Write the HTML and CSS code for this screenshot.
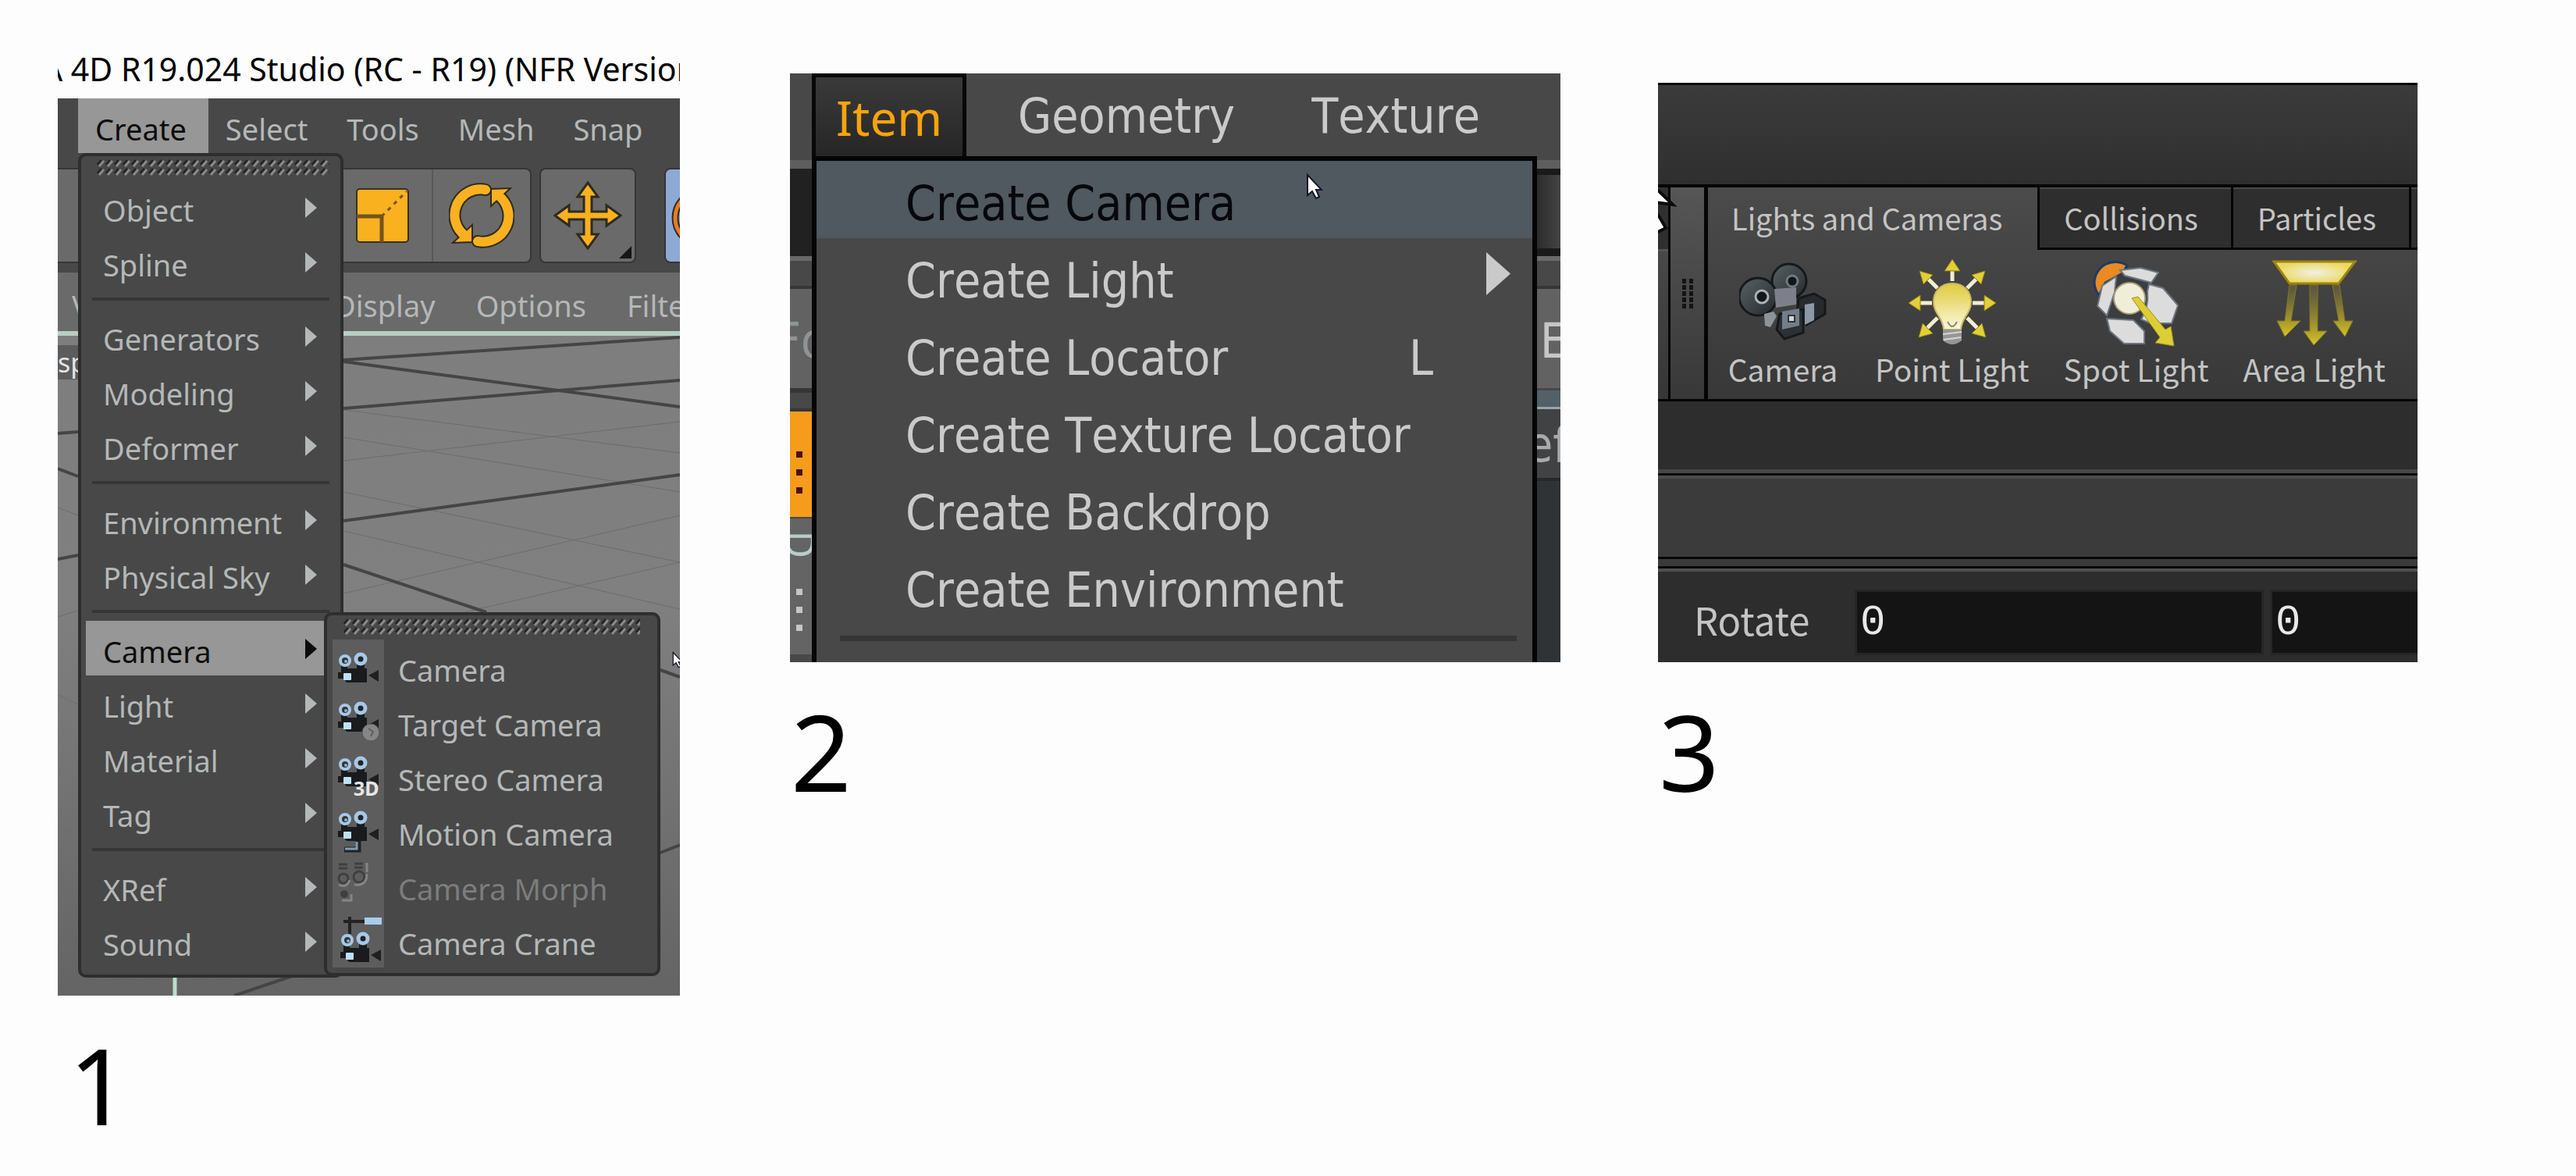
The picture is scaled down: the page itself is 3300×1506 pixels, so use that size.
FILE: index.html
```html
<!DOCTYPE html>
<html lang="en">
<head>
<meta charset="utf-8">
<title>Camera creation menus</title>
<link rel="stylesheet" href="styles.css">
</head>
<body>
<svg class="defs" aria-hidden="true">
  <defs>
    <symbol id="cam" viewBox="0 0 60 46" overflow="visible">
      <path d="M6 23h33v18H13l-4-5H2v-8h4zM6 17h8v8H6zM26 17h10v8H26z" fill="#1a1b1d"/>
      <circle cx="11" cy="13" r="6" fill="#333" stroke="#a6c8e6" stroke-width="4"/>
      <circle cx="31" cy="11" r="6" fill="#222" stroke="#a6c8e6" stroke-width="5"/>
      <circle cx="12" cy="14" r="2" fill="#8fb0cc"/>
      <path d="M41 32l13-7v15z" fill="#1d1f21"/>
      <rect x="9" y="29" width="10" height="9" rx="1" fill="#bfe0f7"/>
    </symbol>
    <symbol id="pointer" viewBox="0 0 22 34">
      <path d="M2 2v26l6-5 5 9 4-2-4-9h7z" fill="#fff" stroke="#15152c" stroke-width="2"/>
    </symbol>
    <pattern id="grip" width="11" height="11" patternUnits="userSpaceOnUse">
      <path d="M1 7l5-6" stroke="#242424" stroke-width="3"/>
      <path d="M3 9l6-7" stroke="#8a8a8a" stroke-width="3"/>
    </pattern>
    <linearGradient id="bulb" x1="0" y1="0" x2="0" y2="1"><stop offset="0" stop-color="#e0ca3c"/><stop offset="1" stop-color="#fbf8dc"/></linearGradient>
    <linearGradient id="ray" x1="0" y1="0" x2="0" y2="1"><stop offset="0" stop-color="#8d8334" stop-opacity=".3"/><stop offset="1" stop-color="#d8c522"/></linearGradient>
    <radialGradient id="panelglow"><stop offset="0" stop-color="#f2f0e6"/><stop offset="1" stop-color="#ecd95a"/></radialGradient>
    <linearGradient id="reel" x1="0" y1="0" x2="1" y2="1"><stop offset="0" stop-color="#5a6267"/><stop offset="1" stop-color="#24292c"/></linearGradient>
  </defs>
</svg>

<main class="sheet">
  <figure class="figure figure-one">
    <div class="c4d">
      <h1 class="c4d-title">A 4D R19.024 Studio (RC - R19) (NFR Version</h1>
      <div class="c4d-screen">
        <nav class="c4d-menubar">
          <button class="bar-item is-open">Create</button>
          <button class="bar-item">Select</button>
          <button class="bar-item">Tools</button>
          <button class="bar-item">Mesh</button>
          <button class="bar-item">Snap</button>
        </nav>
        <div class="c4d-toolbar">
          <div class="tool-group tool-group-wide">
            <button class="tool" aria-label="Scale">
              <svg width="70" height="72" viewBox="0 0 70 72"><rect x="2" y="2" width="66" height="68" rx="4" fill="#f9b120" stroke="#3a3022" stroke-width="2"/><path d="M2 37h32v33" fill="none" stroke="#73541c" stroke-width="5"/><path d="M34 37L66 5" stroke="#73541c" stroke-width="3" stroke-dasharray="5 6"/></svg>
            </button>
            <button class="tool" aria-label="Rotate">
              <svg width="84" height="84" viewBox="0 0 84 84"><g fill="none" stroke="#2e2a22" stroke-width="16"><path d="M47 9A33 33 0 0 0 21 68" stroke-linecap="round"/><path d="M37 75A33 33 0 0 0 63 16" stroke-linecap="round"/></g><path d="M5 77l25-23v22zM79 7L54 30V8z" fill="#f9b120" stroke="#2e2a22" stroke-width="2"/><g fill="none" stroke="#f9b120" stroke-width="12"><path d="M47 9A33 33 0 0 0 21 68" stroke-linecap="round"/><path d="M37 75A33 33 0 0 0 63 16" stroke-linecap="round"/></g></svg>
            </button>
          </div>
          <div class="tool-group tool-group-move">
            <button class="tool" aria-label="Move">
              <svg width="88" height="88" viewBox="0 0 88 88"><path d="M44 2l13 18-8 0v19h19v-8l18 13-18 13v-8H49v19h8L44 86 31 68h8V49H20v8L2 44l18-13v8h19V20h-8z" fill="#f9b120" stroke="#2e2a22" stroke-width="3"/></svg>
            </button>
            <svg class="corner" width="16" height="16" viewBox="0 0 16 16"><path d="M16 0v16H0z" fill="#161616"/></svg>
          </div>
          <div class="tool-group tool-group-blue">
            <svg width="20" height="122" viewBox="0 0 20 122"><circle cx="46" cy="62" r="34" fill="none" stroke="#2e2a22" stroke-width="9"/><circle cx="46" cy="62" r="34" fill="none" stroke="#e87b25" stroke-width="5"/></svg>
          </div>
        </div>
        <div class="c4d-viewbar">
          <span class="view-first">V</span>
          <span>Display</span>
          <span>Options</span>
          <span>Filter</span>
        </div>
        <div class="c4d-viewport">
          <svg class="scene" viewBox="0 0 797 845" preserveAspectRatio="none">
            <g fill="none" stroke="#6d6d6d" stroke-width="1"><path d="M366 200L797 290M366 250L797 350M366 130L797 200M366 330L797 230M366 390L797 290M366 160L797 110M366 95L797 150M0 220L26 230M0 360L26 352M0 460L26 472M0 640L26 630"/></g>
            <g fill="none" stroke="#454545" stroke-width="4"><path d="M366 31L797 2M366 33L797 91M366 93L797 57M366 237L797 178M366 293L549 354M772 428L797 437M772 662L797 652M226 845L300 820M0 125L26 123M0 170L26 180M0 286L26 281"/></g>
            <path d="M150 818v27" stroke="#bcdccb" stroke-width="5"/>
          </svg>
          <span class="view-label">rsp</span>
        </div>

        <div class="create-menu">
          <svg class="grip"><rect width="100%" height="22" fill="url(#grip)"/></svg>
          <button class="row">Object<i class="arrow"></i></button>
          <button class="row">Spline<i class="arrow"></i></button>
          <hr class="rule">
          <button class="row">Generators<i class="arrow"></i></button>
          <button class="row">Modeling<i class="arrow"></i></button>
          <button class="row">Deformer<i class="arrow"></i></button>
          <hr class="rule">
          <button class="row">Environment<i class="arrow"></i></button>
          <button class="row">Physical Sky<i class="arrow"></i></button>
          <hr class="rule">
          <button class="row is-active">Camera<i class="arrow"></i></button>
          <button class="row">Light<i class="arrow"></i></button>
          <button class="row">Material<i class="arrow"></i></button>
          <button class="row">Tag<i class="arrow"></i></button>
          <hr class="rule">
          <button class="row">XRef<i class="arrow"></i></button>
          <button class="row">Sound<i class="arrow"></i></button>
        </div>

        <div class="camera-menu">
          <svg class="grip"><rect width="100%" height="22" fill="url(#grip)"/></svg>
          <button class="cam-row"><svg class="cam-icon" viewBox="0 0 66 70"><use href="#cam" x="5" y="14" width="60" height="46"/></svg>Camera</button>
          <button class="cam-row"><svg class="cam-icon" viewBox="0 0 66 70"><use href="#cam" x="5" y="7" width="60" height="46"/><circle cx="49" cy="49" r="11" fill="#868686" stroke="#555"/><path d="M46 44l6 4-3 6" fill="none" stroke="#5e5e5e" stroke-width="2"/></svg>Target Camera</button>
          <button class="cam-row"><svg class="cam-icon" viewBox="0 0 66 70"><use href="#cam" x="5" y="7" width="60" height="46"/><text class="badge-3d" x="27" y="60">3D</text></svg>Stereo Camera</button>
          <button class="cam-row"><svg class="cam-icon" viewBox="0 0 66 70"><use href="#cam" x="5" y="7" width="60" height="46"/><path d="M33 48v11H15" fill="none" stroke="#202428" stroke-width="7"/><path d="M31 49v9H16" fill="none" stroke="#7f9cb6" stroke-width="3"/></svg>Motion Camera</button>
          <button class="cam-row" disabled><svg class="cam-icon" viewBox="0 0 66 70"><g fill="none" stroke="#404040" stroke-width="3"><circle cx="14" cy="26" r="6"/><circle cx="34" cy="24" r="7"/><path d="M8 8h11M28 7h11M8 13h11M28 12h11"/></g><g fill="none" stroke="#858585" stroke-width="3"><path d="M8 34q10 5 14-6M28 34q16 2 16-14M44 6v12M12 54h12v-8"/></g><circle cx="15" cy="46" r="5" fill="#404040"/></svg>Camera Morph</button>
          <button class="cam-row"><svg class="cam-icon" viewBox="0 0 66 70"><path d="M14 11h30M22 5v22" stroke="#202224" stroke-width="4"/><rect x="41" y="6" width="22" height="9" fill="#a9cdea"/><use href="#cam" x="8" y="22" width="60" height="46"/></svg>Camera Crane</button>
        </div>
        <svg class="pointer pointer-one" width="14" height="22"><use href="#pointer"/></svg>
      </div>
    </div>
    <figcaption class="number">1</figcaption>
  </figure>

  <figure class="figure figure-two">
    <div class="modo">
      <nav class="modo-menubar">
        <button class="modo-tab is-open">Item</button>
        <button class="modo-tab">Geometry</button>
        <button class="modo-tab">Texture</button>
      </nav>
      <div class="modo-behind">
        <div class="strip strip-left">
          <div class="edge"></div>
          <div class="well"></div>
          <div class="band"></div>
          <div class="field field-faint">Fo</div>
          <div class="band band-thin"></div>
          <div class="side-tab side-tab-on"><i class="dots"></i></div>
          <div class="side-tab"><span class="side-letter">D</span><i class="dots"></i></div>
        </div>
        <div class="strip strip-right">
          <div class="edge"></div>
          <div class="well well-soft"></div>
          <div class="band"></div>
          <div class="field">E</div>
          <div class="slate"></div>
          <div class="tab-end">ef</div>
          <div class="view-end"></div>
        </div>
      </div>
      <div class="item-menu">
        <button class="item-row is-active">Create Camera</button>
        <button class="item-row">Create Light<i class="big-arrow"></i></button>
        <button class="item-row">Create Locator<kbd class="key">L</kbd></button>
        <button class="item-row">Create Texture Locator</button>
        <button class="item-row">Create Backdrop</button>
        <button class="item-row">Create Environment</button>
        <hr class="item-rule">
      </div>
      <svg class="pointer pointer-two" width="22" height="34"><use href="#pointer"/></svg>
    </div>
    <figcaption class="number">2</figcaption>
  </figure>

  <figure class="figure figure-three">
    <div class="houdini">
      <div class="h-header"></div>
      <div class="h-body">
        <div class="h-prev">
          <div class="h-prev-tab"></div>
          <div class="h-prev-shelf"></div>
        </div>
        <div class="h-grip"><i class="grip-dots"></i></div>
        <div class="shelf">
          <nav class="shelf-tabs">
            <button class="shelf-tab is-open">Lights and Cameras</button>
            <button class="shelf-tab">Collisions</button>
            <button class="shelf-tab">Particles</button>
            <span class="shelf-tab shelf-tab-rest"></span>
          </nav>
          <div class="shelf-tools">
            <button class="shelf-tool">
              <svg class="shelf-icon" viewBox="0 0 112 112"><g stroke="#15191b" stroke-width="3"><circle cx="64" cy="28" r="22" fill="url(#reel)"/><circle cx="24" cy="48" r="24" fill="url(#reel)"/><path d="M76 50l20-6 14 8v18L86 84 74 72z" fill="#272b2f"/><path d="M52 70l30-6v30L58 102 48 90z" fill="#2c3136"/></g><circle cx="68" cy="28" r="7" fill="#111517" stroke="#6e787d" stroke-width="3"/><circle cx="29" cy="48" r="8" fill="#14181b" stroke="#aab2b6" stroke-width="3"/><path d="M45 38l28-2v22l-26 4z" fill="#7d808b"/><path d="M55 67l22-4v22l-22 5z" fill="#737e8a"/><path d="M63 72h8v8h-8z" fill="#cfd6db" stroke="#333" stroke-width="2"/><path d="M84 58l12-2v22l-12 6z" fill="#8b98a4"/><path d="M32 70l12-3 4 6-8 14-7-2z" fill="#8d9499"/></svg>
              <span>Camera</span>
            </button>
            <button class="shelf-tool">
              <svg class="shelf-icon" viewBox="0 0 112 112"><path d="M56 28V10M30 56H12M82 56h18M37 37L24 24M75 37l13-13M37 75L24 88M75 75l13 13" stroke="#f1eed2" stroke-width="5"/><path d="M56 0l10 15H46zM0 56l15-10v20zM112 56L97 46v20zM14 15l17 5-12 12zM98 15l-5 17-12-12zM13 100l5-18 13 13zM99 100l-18-5 13-13z" fill="#e2cf38" stroke="#8b7b16" stroke-width="1"/><path d="M56 31c-15 0-24 11-24 23 0 16 12 20 13 36h22c1-16 13-20 13-36 0-12-9-23-24-23z" fill="url(#bulb)" stroke="#c9bd62" stroke-width="2"/><path d="M50 80q6 12 12 0" fill="none" stroke="#8b8b7c" stroke-width="2"/><path d="M44 90h24v14q-12 10-24 0z" fill="#969696"/><path d="M44 96l24-3M45 103l22-3" stroke="#d8d8d0" stroke-width="2"/></svg>
              <span>Point Light</span>
            </button>
            <button class="shelf-tool">
              <svg class="shelf-icon" viewBox="0 0 112 112"><path d="M2 30A27 27 0 0 1 44 8L38 18 16 30 8 46A27 27 0 0 1 2 30z" fill="#e98a22" stroke="#1f3a63" stroke-width="3"/><path d="M30 20h40l8 12v34l-12 14H26L18 66z" fill="#3b3d40"/><g fill="#dcdcdc" stroke="#6b7480" stroke-width="2"><path d="M35 14l26-3 23 6-9 13-34-9z"/><path d="M30 22l-2 20-10 30L6 60l6-26z"/><path d="M72 32l18 5 19 22-8 23H74l-12-5q10-16 8-36z"/><path d="M18 76l34 2 14 14v16H40L22 92z"/></g><circle cx="47" cy="50" r="20" fill="#f0eedb" stroke="#a89f70" stroke-width="2"/><path d="M50 50l8-2 35 42 7-4 4 25-24-4 6-7z" fill="#ddce36" stroke="#9a8d20" stroke-width="1"/></svg>
              <span>Spot Light</span>
            </button>
            <button class="shelf-tool">
              <svg class="shelf-icon" viewBox="0 0 112 112"><path d="M4 3h104L87 31H24z" fill="url(#panelglow)" stroke="#9c8512" stroke-width="3"/><g stroke="#85781f" stroke-width="1" fill="url(#ray)"><path d="M24 33h9l-7 46h12L18 99 8 79h10z"/><path d="M50 33h10v59h12L55 110 42 92h8z"/><path d="M79 33h9l7 46h10L95 99 80 79h7z"/></g></svg>
              <span>Area Light</span>
            </button>
          </div>
        </div>
      </div>
      <div class="h-gap"></div>
      <div class="h-band"></div>
      <div class="h-split"></div>
      <div class="h-params">
        <label class="h-label" for="rx">Rotate</label>
        <input class="h-field" id="rx" value="0">
        <input class="h-field h-field-cut" aria-label="Rotate Y" value="0">
      </div>
      <svg class="pointer pointer-three" width="24" height="64" viewBox="0 0 24 64"><path d="M-4-2L19 20-4 17zM-4 26L10 50-4 57z" fill="#fff" stroke="#0c0c0c" stroke-width="4"/></svg>
    </div>
    <figcaption class="number">3</figcaption>
  </figure>
</main>
</body>
</html>
```
FILE: styles.css
```css
* { box-sizing: border-box; }
body { margin: 0; background: #fdfdfd; font-family: "Noto Sans", "Open Sans", sans-serif; color: #000; }
button { margin: 0; border: 0; padding: 0; background: none; color: inherit; font: inherit; font-kerning: inherit; text-align: left; white-space: nowrap; }
svg { display: block; flex: none; }
hr { border: 0; margin: 0; }
.defs { position: absolute; width: 0; height: 0; }

.sheet { display: grid; grid-template-columns: 797fr 1003fr 973fr; column-gap: 125px; padding: 50px 203px 0 74px; align-items: start; }
.figure { margin: 0; min-width: 0; }
.figure-two { padding: 44px 0 0 16px; }
.figure-three { padding-top: 56px; }
.number { font-size: 136px; line-height: 160px; }
.figure-one .number { padding: 34px 0 0 14px; }
.figure-two .number, .figure-three .number { padding: 34px 0 0 1px; }
.pointer { position: absolute; }

/* Cinema 4D */
.c4d-title { margin: 0; height: 76px; overflow: hidden; white-space: nowrap; font-size: 41px; line-height: 76px; font-weight: 400; text-indent: -20px; }
.c4d-screen { position: relative; overflow: hidden; background: #484848; font-size: 38px; color: #b4b8b8; }
.c4d-menubar { display: flex; height: 89px; padding-left: 26px; }
.bar-item { height: 70px; padding: 7px 28px 0 22px; line-height: 62px; }
.bar-item.is-open { background: #979797; color: #0c0c0c; }
.c4d-toolbar { display: flex; height: 134px; align-items: flex-start; overflow: hidden; }
.tool-group { position: relative; display: flex; height: 122px; background: #6a6a6a; border: 2px solid #363636; border-radius: 8px; flex: none; }
.tool-group-wide { border-left: 0; border-radius: 0 8px 8px 0; width: 607px; justify-content: flex-end; margin-right: 10px; }
.tool { width: 126px; display: grid; place-items: center; }
.tool + .tool { border-left: 2px solid #585858; }
.tool-group-move { margin-right: 36px; width: 124px; justify-content: center; }
.tool-group-blue { background: #8ea9d4; width: 124px; }
.corner { position: absolute; right: 4px; bottom: 4px; }
.c4d-viewbar { display: flex; height: 75px; gap: 52px; padding-top: 11px; line-height: 62px; background: #6a6a6a; white-space: nowrap; overflow: hidden; }
.view-first { width: 302px; padding-left: 18px; flex: none; }
.c4d-viewport { position: relative; height: 851px; border-top: 6px solid #b6cfc2; background: linear-gradient(#7e7e7e, #808080 40%, #646464); overflow: hidden; }
.scene { width: 100%; height: 100%; }
.view-label { position: absolute; left: -14px; top: 12px; line-height: 44px; font-size: 34px; color: #e4e4e4; background: #5c5c5c; }

.create-menu, .camera-menu { position: absolute; background: #484848; border: 4px solid #2e2e2e; border-radius: 10px; }
.create-menu { left: 26px; top: 70px; width: 340px; padding: 4px 6px 8px; }
.camera-menu { left: 341px; top: 658px; width: 431px; padding: 4px 7px 7px; }
.grip { width: auto; height: 22px; margin: 0 10px 4px 14px; }
.create-menu .grip { width: 298px; }
.camera-menu .grip { width: 380px; margin-bottom: 5px; }
.row { display: flex; align-items: center; justify-content: space-between; width: 100%; height: 70px; padding: 8px 24px 0 22px; line-height: 62px; }
.row.is-active { background: #979797; color: #0c0c0c; }
.arrow { width: 15px; height: 26px; margin-bottom: 6px; background: currentColor; clip-path: polygon(0 0, 100% 50%, 0 100%); }
.rule { height: 25px; margin: 0 8px; background: linear-gradient(#363636, #363636) center / 100% 4px no-repeat; }
.cam-row { display: flex; align-items: flex-start; gap: 18px; width: 100%; height: 70px; line-height: 78px; }
.cam-row:disabled { color: #7b7d7d; }
.cam-icon { width: 66px; height: 70px; background: #5d5d5d; }
.badge-3d { font: 700 25px "Noto Sans", sans-serif; fill: #e6e6e6; }
.pointer-one { right: -4px; top: 708px; }

/* Modo */
.modo { position: relative; height: 754px; background: #484848; overflow: hidden; font-family: "DejaVu Sans Condensed", "DejaVu Sans", sans-serif; font-size: 62px; font-kerning: none; color: #cacaca; }
.modo-menubar { display: flex; height: 111px; padding-left: 28px; }
.modo-tab { height: 106px; padding: 0 0 0 98px; line-height: 110px; }
.modo-tab.is-open { width: 198px; padding: 0 26px; border: 5px solid #080808; border-bottom: 0; background: linear-gradient(#3a3a3a, #262626); color: #f6a30e; line-height: 92px; font-family: "Noto Sans", sans-serif; }
.modo-tab.is-open + .modo-tab { padding-left: 66px; }
.modo-behind { display: flex; justify-content: space-between; }
.strip { width: 30px; overflow: hidden; color: #c6c6c6; font-size: 62px; }
.edge { height: 11px; background: #5e5e5e; }
.well { height: 112px; background: #212121; }
.well-soft { background: linear-gradient(90deg, #2c2c2c, #444); border: solid #1a1a1a; border-width: 8px 0 10px; }
.band { height: 42px; background: #484848; border: solid #363636; border-top-color: #6a6a6a; border-width: 6px 0 4px; }
.field { height: 127px; line-height: 134px; padding-left: 4px; background: #626262; }
.field-faint { padding-left: 0; text-indent: -18px; color: #8e9494; }
.band-thin { height: 30px; border-top-color: #363636; }
.side-tab { height: 174px; padding: 16px 8px 0; margin-bottom: 2px; background: #646464; display: flex; flex-direction: column; justify-content: space-between; }
.side-tab-on { height: 135px; background: #f69c1c; color: #4a1208; justify-content: flex-end; }
.side-letter { writing-mode: vertical-rl; line-height: 20px; font-size: 50px; color: #b8cccc; }
.dots { width: 8px; height: 60px; margin-bottom: 24px; background: repeating-linear-gradient(currentColor 0 8px, transparent 8px 23px); }
.slate { height: 24px; margin-top: 3px; background: #526068; border-bottom: 3px solid #9aa4a8; }
.tab-end { height: 92px; line-height: 92px; text-indent: -14px; background: #404244; color: #aaa; border-bottom: 4px solid #26292b; }
.view-end { height: 240px; background: #2f3336; }
.item-menu { position: absolute; left: 28px; right: 30px; top: 106px; height: 660px; border: 6px solid #050505; background: #484848; }
.item-row { display: flex; align-items: center; position: relative; width: 100%; height: 99px; padding: 10px 28px 0 114px; line-height: 88px; }
.item-row.is-active { background: #505860; color: #07080c; }
.big-arrow { width: 31px; height: 55px; margin: 0 0 18px auto; background: #cacaca; clip-path: polygon(0 0, 100% 50%, 0 100%); }
.key { margin: 0 98px 0 auto; font: inherit; width: 32px; }
.item-rule { height: 7px; margin: 14px 20px 0 30px; background: #353535; }
.pointer-two { left: 67%; top: 128px; }

/* Houdini */
.houdini { position: relative; height: 742px; overflow: hidden; background: #2d2d2d; font-family: "Noto Sans CJK JP", "Noto Sans", sans-serif; font-size: 38px; color: #c4c4c4; }
.h-header { height: 134px; border: solid #050505; border-width: 3px 0 4px; background: linear-gradient(#3b3b3b, #2f2f2f); }
.h-body { display: flex; height: 274px; border-bottom: 3px solid #050505; }
.h-prev { width: 16px; border-right: 3px solid #050505; }
.h-prev-tab { height: 82px; background: #2f2f2f; border-bottom: 3px solid #555; }
.h-prev-shelf { height: 189px; background: linear-gradient(#484848, #363636); }
.h-grip { width: 48px; display: grid; place-items: center; border-right: 5px solid #050505; background: linear-gradient(#565656, #383838); }
.grip-dots { width: 14px; height: 38px; background: repeating-linear-gradient(90deg, transparent 0 5px, #484848 5px 9px), repeating-linear-gradient(#141414 0 6px, transparent 6px 8px); }
.shelf { flex: 1; min-width: 0; background: linear-gradient(#4b4b4b, #383838); }
.shelf-tabs { display: flex; height: 80px; }
.shelf-tab { padding: 0 42px 0 31px; line-height: 76px; border: solid #050505; border-width: 0 0 3px 3px; background: #2e2e2e; box-shadow: inset 0 2px #4a4a4a; }
.shelf-tab.is-open { border-color: transparent; padding: 0 45px 0 27px; background: none; box-shadow: none; }
.shelf-tab-rest { flex: 1; padding: 0; }
.shelf-tools { display: flex; padding-top: 12px; }
.shelf-tool { min-width: 192px; padding: 0 22px; display: flex; flex-direction: column; align-items: center; font-size: 39px; line-height: 56px; }
.shelf-icon { width: 112px; height: 112px; }
.h-gap { height: 92px; border-bottom: 5px solid #474747; }
.h-band { height: 110px; border: solid #080808; border-width: 3px 0; background: #3b3b3b; box-shadow: inset 0 4px #4c4c4c; }
.h-split { height: 12px; background: #3a3a3a; border-bottom: 3px solid #080808; }
.h-params { display: flex; align-items: center; height: 122px; padding: 12px 0 0 46px; border-top: 4px solid #4f4f4f; }
.h-label { width: 206px; font-size: 49px; line-height: 76px; padding-bottom: 8px; }
.h-field { width: 524px; height: 84px; margin-right: 8px; padding: 0 4px; border: 3px solid #262626; border-radius: 0; background: #141414; color: #e8e8e8; font: 54px "Liberation Mono", monospace; }
.h-field-cut { flex: 1; width: 0; margin-right: 0; border-right: 0; }
.pointer-three { left: 0; top: 136px; }
```
